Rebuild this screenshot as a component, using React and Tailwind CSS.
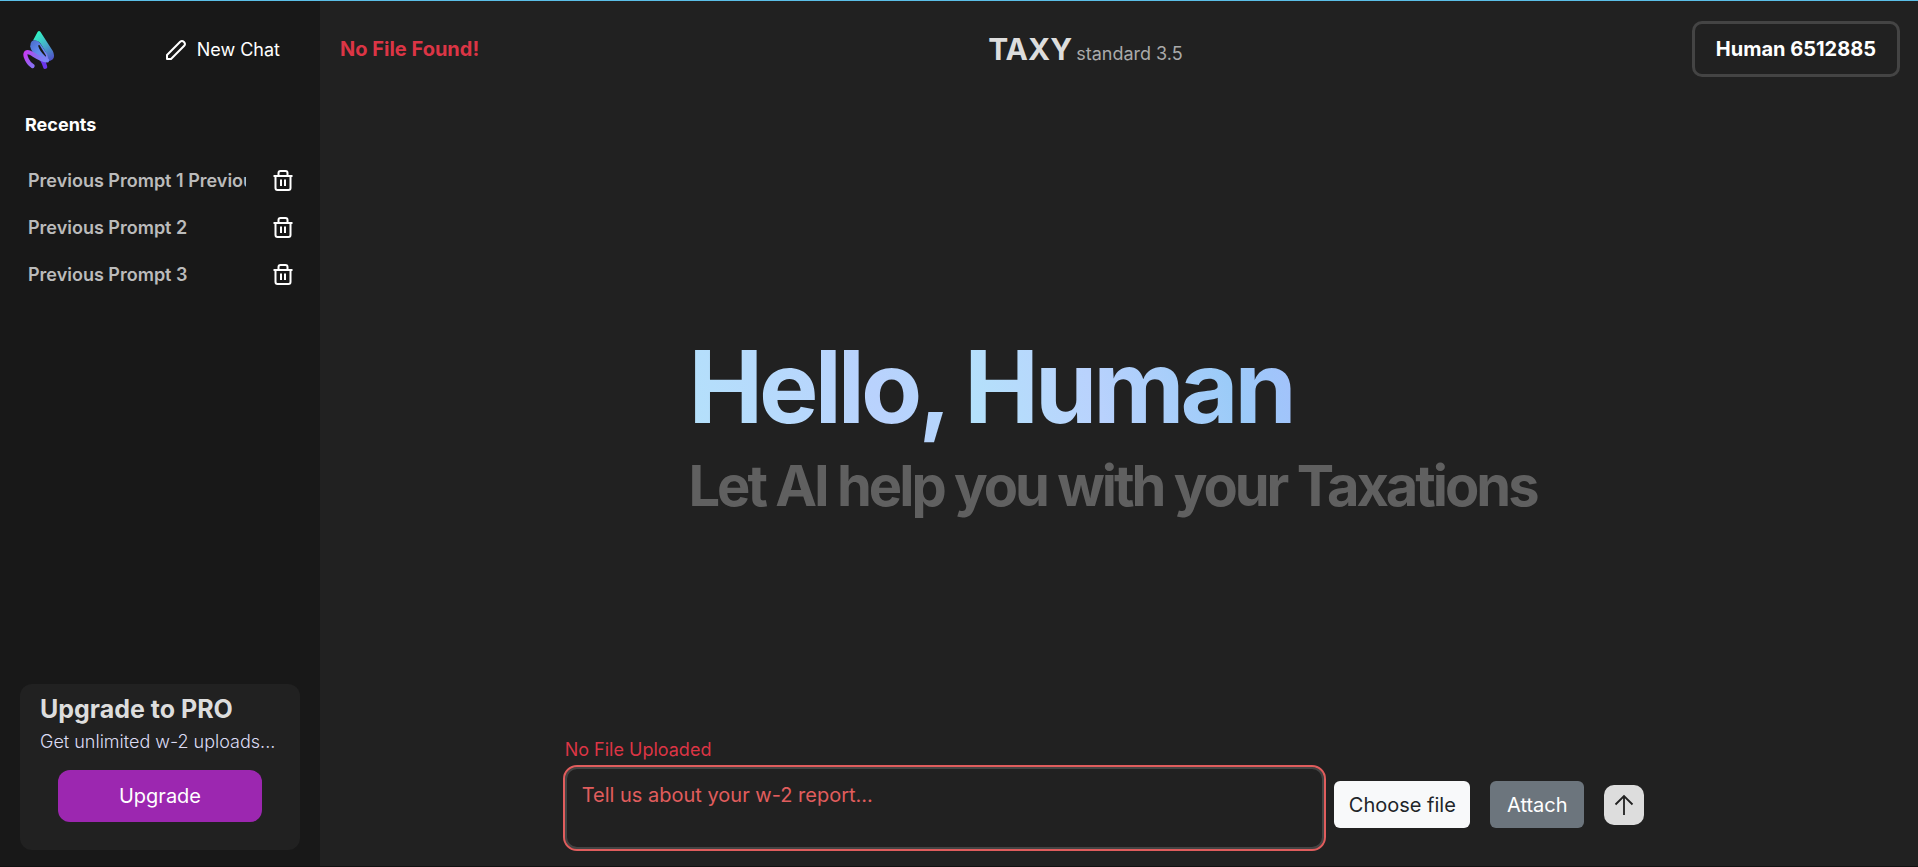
const prompts = [
  "Previous Prompt 1 Previous Prompt 1",
  "Previous Prompt 2",
  "Previous Prompt 3",
];

function Logo() {
  return (
    <svg viewBox="0 0 32 40" className="h-10 w-8" aria-hidden="true">
      <defs>
        <linearGradient id="leaf" x1="0.3" y1="0" x2="0.8" y2="1">
          <stop offset="0" stopColor="#2ff5c4" />
          <stop offset="0.45" stopColor="#45b3c9" />
          <stop offset="1" stopColor="#5050c8" />
        </linearGradient>
        <linearGradient id="loop" x1="0" y1="0" x2="1" y2="1">
          <stop offset="0" stopColor="#4a69c8" />
          <stop offset="0.5" stopColor="#5f8cf0" />
          <stop offset="1" stopColor="#8a7cf5" />
        </linearGradient>
        <linearGradient id="tail" x1="0" y1="0" x2="1" y2="0.3">
          <stop offset="0" stopColor="#c63cf2" />
          <stop offset="0.5" stopColor="#8c6af2" />
          <stop offset="1" stopColor="#7d86f8" />
        </linearGradient>
      </defs>
      <path d="M14 25 C18 27 20.500 31 22.200 36.800" fill="none" stroke="#6a35ea" strokeWidth="4.200" strokeLinecap="round" />
      <path d="M14.700 1.800 Q16 0.200 17.400 1.800 L29.800 21 Q32.500 26.500 29.500 29.600 Q26.500 32 23 31 Q26 28 23 22.500 L17.500 13.500 Q15 10 10 10.500 Z" fill="url(#leaf)" />
      <path d="M9 11 Q13.500 9 17 13 L23.800 23.500 Q26.300 28.500 23.500 31 Q19 31.500 14 27 Q8 21.500 7.200 16.500 Q7 13 9 11 Z" fill="url(#loop)" />
      <path d="M16.500 15 L22.800 25.200 Q23.600 27.400 22 26 Q16.500 21 15 15.500 Z" fill="#181818" />
      <path d="M9.500 36 C5.500 34 0.800 25.500 3 22.700 C7 19.700 13 29 24 30.400" fill="none" stroke="url(#tail)" strokeWidth="4.200" strokeLinecap="round" />
    </svg>
  );
}

function Pencil() {
  return (
    <svg viewBox="0 0 22 22" className="size-[22px]" fill="none" stroke="currentColor" strokeWidth="2" strokeLinejoin="round" aria-hidden="true">
      <path d="M2 20 V16 L15.200 2.800 Q17 1.200 19 3 Q20.800 5 19.200 6.800 L6 20 Z" />
    </svg>
  );
}

function Trash() {
  return (
    <svg viewBox="0 1 20 22" className="h-[22px] w-5" fill="none" stroke="currentColor" strokeWidth="2" aria-hidden="true">
      <path d="M0.500 7 H19.500" />
      <path d="M2.500 7 V19 Q2.500 21 4.500 21 H15.500 Q17.500 21 17.500 19 V7" />
      <path d="M5.500 7 V4 Q5.500 2 7.500 2 H12.500 Q14.500 2 14.500 4 V7" />
      <path d="M8 10.500 V17 M12 10.500 V17" />
    </svg>
  );
}

function ArrowUp() {
  return (
    <svg viewBox="0 0 20 22" className="h-[22px] w-5" fill="none" stroke="currentColor" strokeWidth="1.800" aria-hidden="true">
      <path d="M10 21 V2 M1.500 10.500 L10 2 L18.500 10.500" />
    </svg>
  );
}

function Sidebar() {
  return (
    <aside className="flex w-80 shrink-0 flex-col bg-[#181818] px-5 pb-4">
      <div className="flex h-[98px] items-center justify-between pr-5">
        <a href="#" aria-label="Home" className="ml-[3px]">
          <Logo />
        </a>
        <button type="button" className="flex items-center gap-2.5 text-lg text-white">
          <Pencil />
          New Chat
        </button>
      </div>
      <h2 className="mt-3 px-[5px] text-lg font-bold text-white">Recents</h2>
      <ul className="mt-[18px] flex flex-col">
        {prompts.map((prompt) => (
          <li key={prompt} className="flex h-[47px] items-center justify-between pr-[7px] pl-2">
            <a href="#" className="w-[218px] overflow-hidden text-lg font-semibold whitespace-nowrap text-[#bbbbbb]">
              {prompt}
            </a>
            <button type="button" aria-label={"Delete " + prompt} className="text-white">
              <Trash />
            </button>
          </li>
        ))}
      </ul>
      <section className="mt-auto flex h-[166px] flex-col rounded-xl bg-[#212121] px-5 pt-[9px]">
        <h2 className="text-[25px] leading-8 font-bold text-[#dddddd]">Upgrade to PRO</h2>
        <p className="mt-[3px] text-lg font-light text-[#dcdcf4]">Get unlimited w-2 uploads...</p>
        <button type="button" className="mt-3.5 h-[52px] w-[204px] self-center rounded-xl bg-[#9c27b0] text-xl text-white">
          Upgrade
        </button>
      </section>
    </aside>
  );
}

function Hero() {
  return (
    <div className="flex flex-1 items-center justify-center pt-[38px] pr-[13px]">
      <div className="font-bold">
        <h1 className="text-[100px] leading-[120px] tracking-[-4px]">
          <span className="bg-[linear-gradient(74deg,#b4e1fb_0%,#b9d2fd_70%,#b2d6fb_100%)] bg-clip-text text-transparent">Hello,</span>{" "}
          <span className="bg-[linear-gradient(74deg,#b4e1fb_5%,#b9d2fd_40%,#9bcbf8_78%,#a4c0fc_100%)] bg-clip-text text-transparent">Human</span>
        </h1>
        <p className="text-[56px] leading-[78px] tracking-[-3px] text-[#606060]">Let AI help you with your Taxations</p>
      </div>
    </div>
  );
}

function PromptForm() {
  return (
    <form className="mx-auto w-[70%] pr-[34px] pb-[17px] pl-[5px]" onSubmit={(e) => e.preventDefault()}>
      <p className="mb-[3px] text-lg text-[#dc3545]">No File Uploaded</p>
      <div className="flex items-center">
        <textarea
          aria-label="Report details"
          placeholder="Tell us about your w-2 report..."
          className="h-[82px] min-w-0 flex-1 resize-none rounded-xl border-2 border-[#444444] bg-transparent px-[15px] py-3 text-xl text-white outline-2 outline-[#e05d5d] placeholder:text-[#e05d5d]"
        />
        <div className="flex items-center pb-[7px]">
          <label htmlFor="report-file" className="ml-2.5 flex h-[47px] w-[136px] cursor-pointer items-center justify-center rounded-md bg-[#f8f9fa] text-xl text-[#212529]">
            Choose file
          </label>
          <input id="report-file" type="file" className="sr-only" />
          <button type="button" className="ml-5 h-[47px] w-[94px] rounded-md bg-[#6c757d] text-xl text-white">
            Attach
          </button>
          <button type="submit" aria-label="Send" className="ml-5 flex size-10 items-center justify-center rounded-[10px] bg-[#dddddd] text-[#212121]">
            <ArrowUp />
          </button>
        </div>
      </div>
    </form>
  );
}

export default function App() {
  return (
    <div className="flex min-h-screen border-t border-b border-t-[#5bbfe8] border-b-[#111111] bg-[#212121] font-['Inter',sans-serif]">
      <Sidebar />
      <main className="flex min-w-0 flex-1 flex-col">
        <header className="flex items-center justify-between pt-5 pr-[18px] pl-5">
          <p className="text-xl font-bold text-[#dc3545]">No File Found!</p>
          <p className="text-3xl font-bold text-[#dddddd]">
            TAXY <span className="-ml-[3px] text-lg font-normal text-[#aaaaaa]">standard 3.5</span>
          </p>
          <button type="button" className="h-14 rounded-[10px] border-3 border-[#444444] px-[21px] text-xl font-bold text-white">
            Human 6512885
          </button>
        </header>
        <Hero />
        <PromptForm />
      </main>
    </div>
  );
}
